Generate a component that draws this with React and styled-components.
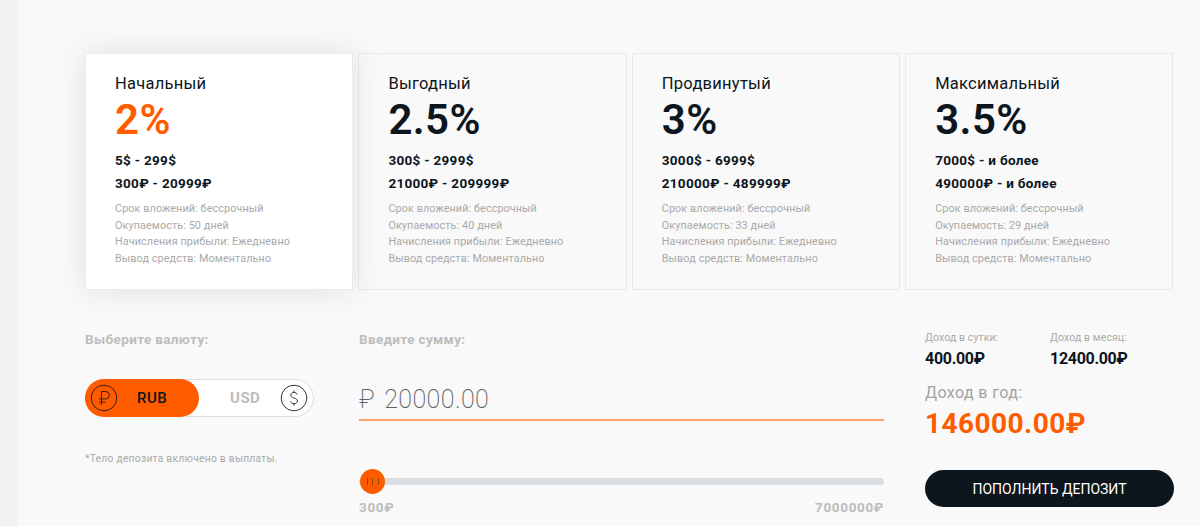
import React from 'react';
import styled, { createGlobalStyle } from 'styled-components';

const GlobalStyle = createGlobalStyle`
  html, body {
    margin: 0;
    padding: 0;
    height: 526px;
    overflow: hidden;
    background: #f2f2f2;
  }
  * { box-sizing: border-box; }
`;

const Page = styled.div`
  margin-left: 18px;
  height: 526px;
  padding: 53px 26px 0 67px;
  background: #f9f9f9;
  font-family: Roboto, 'Noto Sans', sans-serif;
  color: #0d151d;
  overflow: hidden;
`;

const Plans = styled.div`
  display: grid;
  grid-template-columns: repeat(4, 268.3px);
  column-gap: 5.1px;
  height: 237px;
`;

const Plan = styled.div`
  padding: 20px 0 0 29px;
  border: 1px solid ${(p) => (p.$active ? '#ececec' : '#e9e9e9')};
  background: ${(p) => (p.$active ? '#fff' : '#f9f9f9')};
  box-shadow: ${(p) => (p.$active ? '0 0 30px rgba(0, 0, 0, 0.1)' : 'none')};
  position: relative;
  z-index: ${(p) => (p.$active ? 1 : 0)};
`;

const PlanName = styled.div`
  font-size: 16.5px;
  line-height: 20px;
  letter-spacing: 0.25px;
`;

const Percent = styled.div`
  margin: 2px 0 6px;
  font-size: 42px;
  line-height: 47px;
  font-weight: 600;
  letter-spacing: 0.4px;
  color: ${(p) => (p.$active ? '#ff5c00' : '#0d151d')};
`;

const Range = styled.div`
  font-size: 13.5px;
  line-height: 23px;
  font-weight: 700;
  letter-spacing: 0.3px;
`;

const Facts = styled.div`
  margin-top: 6px;
  font-size: 10.8px;
  line-height: 16.67px;
  letter-spacing: 0.1px;
  color: #a9a9a9;
`;

const Bottom = styled.div`
  display: grid;
  grid-template-columns: 274px 525px 1fr;
  column-gap: 0;
  margin-top: 40px;
`;

const Heading = styled.div`
  font-size: 13.5px;
  line-height: 18px;
  font-weight: 700;
  letter-spacing: 0.35px;
  color: #bdbdbd;
`;

const CurrencyColumn = styled.div`
  display: flex;
  flex-direction: column;
`;

const Toggle = styled.div`
  display: flex;
  align-items: center;
  width: 229px;
  height: 38px;
  margin-top: 31px;
  border: 1px solid #dedede;
  border-radius: 19px;
  background: #fff;
`;

const ActiveSide = styled.div`
  display: flex;
  align-items: center;
  width: 114px;
  height: 38px;
  margin: -1px 0 -1px -1px;
  padding-left: 5px;
  border-radius: 19px;
  background: #ff5c00;
  font-size: 15px;
  font-weight: 500;
  letter-spacing: 0.5px;
  color: #0d151d;
`;

const IdleSide = styled.div`
  display: flex;
  align-items: center;
  justify-content: space-between;
  flex: 1;
  padding: 0 5px 0 31px;
  font-size: 15px;
  font-weight: 700;
  letter-spacing: 0.5px;
  color: #bdbdbd;
`;

const CurrencyLabel = styled.span`
  margin-left: 19px;
`;

const Note = styled.div`
  margin-top: 35px;
  font-size: 10.3px;
  line-height: 14px;
  letter-spacing: 0.25px;
  color: #a9a9a9;
`;

const AmountColumn = styled.div`
  display: flex;
  flex-direction: column;
`;

const AmountField = styled.div`
  display: flex;
  align-items: center;
  gap: 9px;
  height: 42px;
  margin-top: 31px;
  border-bottom: 2px solid #ff9d6c;
  font-size: 25px;
  font-weight: 200;
  letter-spacing: 0.4px;
  color: #5f6368;
`;

const Track = styled.div`
  position: relative;
  height: 7px;
  margin-top: 57px;
  border-radius: 4px;
  background: #dadde2;
`;

const Thumb = styled.div`
  position: absolute;
  left: 1px;
  top: -9px;
  display: flex;
  align-items: center;
  justify-content: center;
  gap: 4.5px;
  width: 25px;
  height: 25px;
  border-radius: 50%;
  background: #ff5c00;
`;

const Notch = styled.i`
  width: 1px;
  height: 7px;
  background: #99400c;
`;

const Limits = styled.div`
  display: flex;
  justify-content: space-between;
  margin-top: 14px;
  font-size: 13.5px;
  line-height: 16px;
  font-weight: 700;
  letter-spacing: 0.65px;
  color: #bdbdbd;
`;

const IncomeColumn = styled.div`
  display: flex;
  flex-direction: column;
  padding-left: 41px;
  margin-top: 1px;
`;

const IncomeRow = styled.div`
  display: grid;
  grid-template-columns: 125px 1fr;
`;

const SmallLabel = styled.div`
  font-size: 10.5px;
  line-height: 14px;
  letter-spacing: 0.1px;
  color: #a9a9a9;
`;

const SmallValue = styled.div`
  margin-top: 3px;
  font-size: 16px;
  line-height: 22px;
  font-weight: 700;
  letter-spacing: -0.3px;
`;

const YearLabel = styled.div`
  margin-top: 13px;
  font-size: 16px;
  line-height: 20px;
  letter-spacing: 0.4px;
  color: #a3a3a3;
`;

const YearValue = styled.div`
  margin-top: 3px;
  font-size: 28px;
  line-height: 36px;
  font-weight: 700;
  letter-spacing: 0.45px;
  color: #ff5c00;
`;

const DepositButton = styled.button`
  width: 249px;
  height: 37px;
  margin-top: 28px;
  border: 0;
  border-radius: 19px;
  background: #0d151d;
  font-family: inherit;
  font-size: 14px;
  font-weight: 400;
  letter-spacing: 0;
  color: #fff;
`;

const CoinSvg = styled.svg`
  flex: none;
  width: 28px;
  height: 28px;
`;

const RubleCoin = () => (
  <CoinSvg viewBox="0 0 28 28" fill="none" stroke="#3a2015" strokeWidth="1">
    <circle cx="14" cy="14" r="12.8" />
    <path d="M11.5 21V7.5h4.2a3.6 3.6 0 0 1 0 7.4H9M9 18h6.5" />
  </CoinSvg>
);

const DollarCoin = () => (
  <CoinSvg viewBox="0 0 28 28" fill="none" stroke="#33383d" strokeWidth="1">
    <circle cx="14" cy="14" r="12.8" />
    <path d="M17.2 10.6c-.4-1.5-1.7-2.2-3.2-2.2-1.8 0-3.2 1-3.2 2.7 0 3.8 6.6 2 6.6 5.9 0 1.7-1.5 2.7-3.4 2.7-1.7 0-3-.9-3.4-2.4M14 6.5v2M14 19.6v2" />
  </CoinSvg>
);

const plans = [
  { name: 'Начальный', percent: '2%', usd: '5$ - 299$', rub: '300₽ - 20999₽', days: 50, active: true },
  { name: 'Выгодный', percent: '2.5%', usd: '300$ - 2999$', rub: '21000₽ - 209999₽', days: 40 },
  { name: 'Продвинутый', percent: '3%', usd: '3000$ - 6999$', rub: '210000₽ - 489999₽', days: 33 },
  { name: 'Максимальный', percent: '3.5%', usd: '7000$ - и более', rub: '490000₽ - и более', days: 29 },
];

export default function App() {
  return (
    <Page>
      <GlobalStyle />
      <Plans>
        {plans.map((plan) => (
          <Plan key={plan.name} $active={plan.active}>
            <PlanName>{plan.name}</PlanName>
            <Percent $active={plan.active}>{plan.percent}</Percent>
            <Range>{plan.usd}</Range>
            <Range>{plan.rub}</Range>
            <Facts>
              <div>Срок вложений: бессрочный</div>
              <div>Окупаемость: {plan.days} дней</div>
              <div>Начисления прибыли: Ежедневно</div>
              <div>Вывод средств: Моментально</div>
            </Facts>
          </Plan>
        ))}
      </Plans>
      <Bottom>
        <CurrencyColumn>
          <Heading>Выберите валюту:</Heading>
          <Toggle>
            <ActiveSide>
              <RubleCoin />
              <CurrencyLabel>RUB</CurrencyLabel>
            </ActiveSide>
            <IdleSide>
              USD
              <DollarCoin />
            </IdleSide>
          </Toggle>
          <Note>*Тело депозита включено в выплаты.</Note>
        </CurrencyColumn>
        <AmountColumn>
          <Heading>Введите сумму:</Heading>
          <AmountField>
            <span>₽</span>
            <span>20000.00</span>
          </AmountField>
          <Track>
            <Thumb>
              <Notch />
              <Notch />
              <Notch />
            </Thumb>
          </Track>
          <Limits>
            <span>300₽</span>
            <span>7000000₽</span>
          </Limits>
        </AmountColumn>
        <IncomeColumn>
          <IncomeRow>
            <div>
              <SmallLabel>Доход в сутки:</SmallLabel>
              <SmallValue>400.00₽</SmallValue>
            </div>
            <div>
              <SmallLabel>Доход в месяц:</SmallLabel>
              <SmallValue>12400.00₽</SmallValue>
            </div>
          </IncomeRow>
          <YearLabel>Доход в год:</YearLabel>
          <YearValue>146000.00₽</YearValue>
          <DepositButton>ПОПОЛНИТЬ ДЕПОЗИТ</DepositButton>
        </IncomeColumn>
      </Bottom>
    </Page>
  );
}
